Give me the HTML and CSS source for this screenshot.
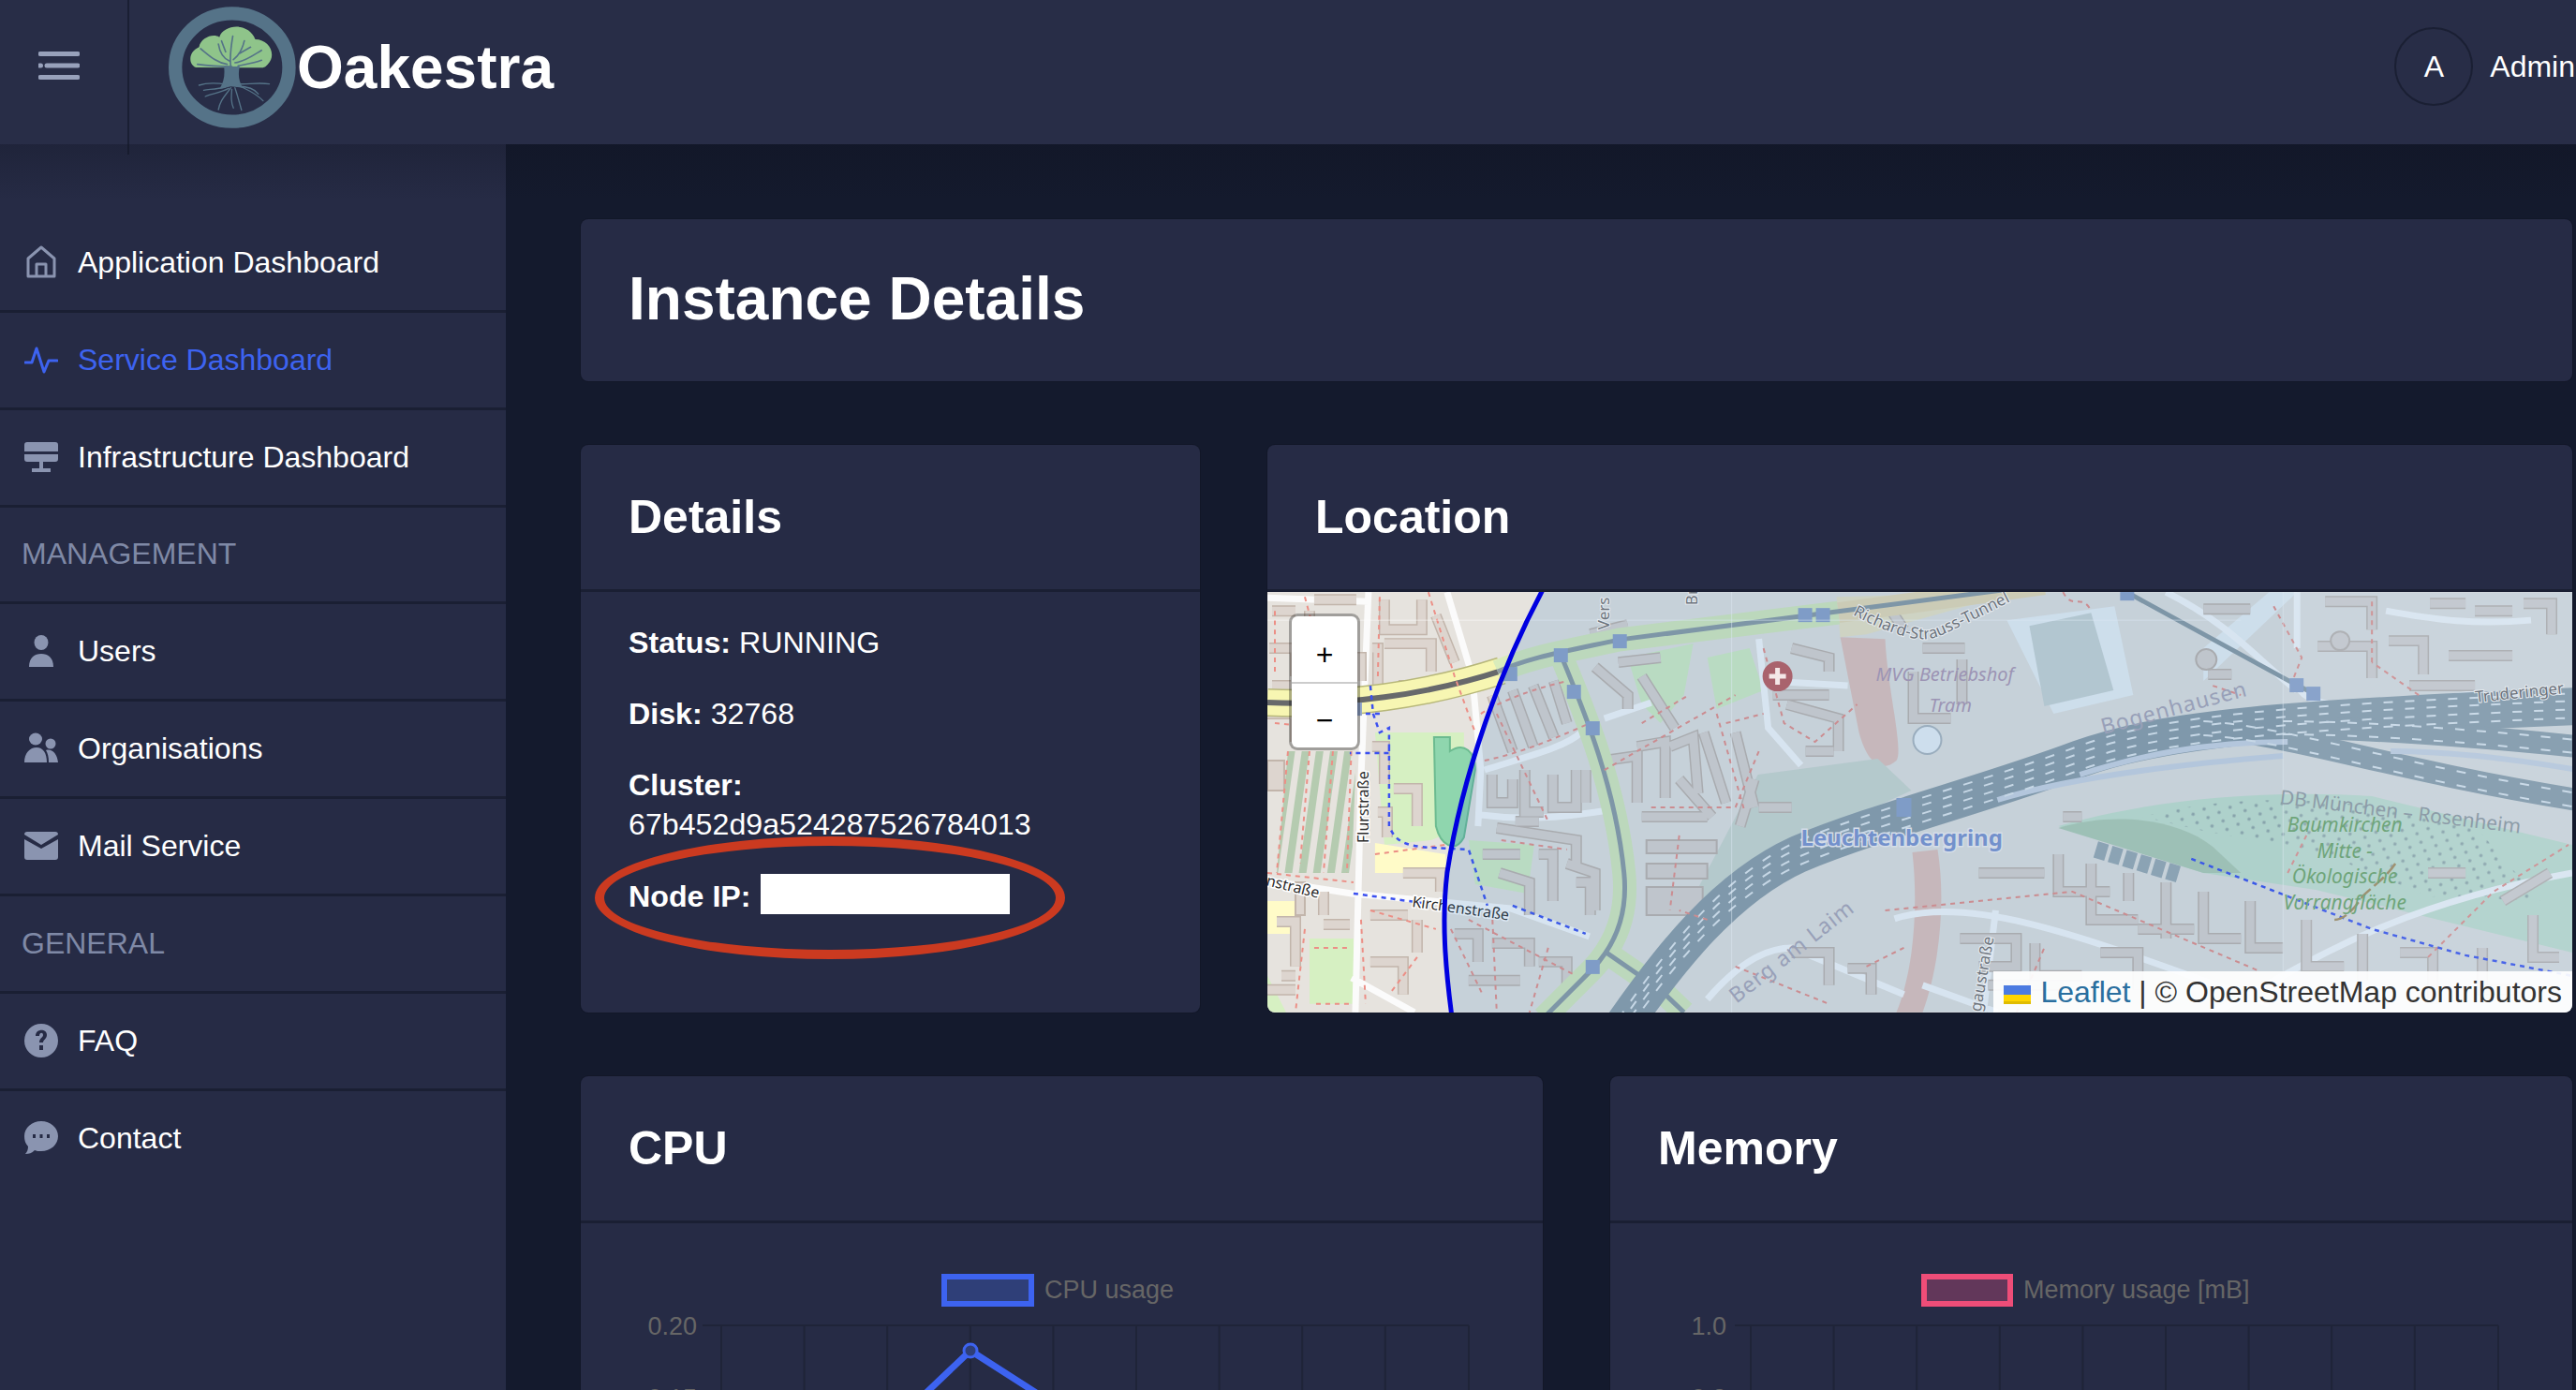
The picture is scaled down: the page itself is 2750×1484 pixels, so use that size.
FILE: index.html
```html
<!DOCTYPE html>
<html lang="en">
<head>
<meta charset="UTF-8">
<meta name="viewport" content="width=device-width, initial-scale=1.0">
<link rel="stylesheet" href="styles.css">
<title>Oakestra</title>
</head>
<body>

<!-- top bar -->
<header class="topbar">
  <div class="menu-cell">
    <svg class="burger" viewBox="0 0 44 30"><path d="M2 2.5H42M9 15H42M2 27.5H42M1.5 15H2.5" /></svg>
  </div>
  <div class="brand">
    <svg class="logo" viewBox="63 20 407 390">
      <ellipse class="logo-ring" cx="266" cy="215" rx="182" ry="173" />
      <path class="logo-crown" d="M150 215C125 205 125 165 160 150C165 120 205 105 225 118C240 75 320 70 340 125C385 125 410 175 380 205C372 215 365 216 355 216Z" />
      <path class="logo-trunk" d="M240 212L290 212C284 240 288 262 300 280L262 276L225 284C240 262 243 240 240 212Z" />
      <path class="logo-branch" d="M262 215C258 190 262 150 268 115M258 195C235 185 225 160 222 140M250 205C215 200 190 175 165 155M270 190C290 175 300 150 305 130M275 200C310 195 335 175 360 160M265 212C220 212 190 210 155 205M285 210C310 205 340 200 360 192M245 165L232 130M290 170L325 150" />
      <path class="logo-root" d="M250 270C220 265 190 262 160 272M245 278C215 285 190 285 175 288M255 282C230 295 200 300 180 308M262 280C240 310 228 320 222 350M265 285C263 310 262 325 270 345M275 280C285 310 290 330 296 352M285 272C310 285 340 295 365 322M290 268C315 270 350 262 385 268M280 275C310 275 335 280 350 300" />
    </svg>
    <span class="brand-name">Oakestra</span>
  </div>
  <div class="account">
    <span class="avatar">A</span>
    <span class="account-name">Admin</span>
  </div>
</header>

<div class="shell">

  <!-- side menu -->
  <nav class="sidebar">
    <a class="nav-item">
      <svg class="icon icon-line" viewBox="0 0 36 36"><path d="M4 33V14L18 2L32 14V33ZM13 33V20H23V33" /></svg>
      <span>Application Dashboard</span>
    </a>
    <a class="nav-item active">
      <svg class="icon icon-line" viewBox="0 0 36 36"><path d="M1 21H8L13 6L21 31L26 19H35" /></svg>
      <span>Service Dashboard</span>
    </a>
    <a class="nav-item">
      <svg class="icon" viewBox="0 0 36 36"><path d="M3 2H33A3 3 0 0 1 36 5V12H0V5A3 3 0 0 1 3 2ZM0 15H36V20A3 3 0 0 1 33 23H3A3 3 0 0 1 0 20ZM16 23H20V30H28V34H8V30H16Z" /></svg>
      <span>Infrastructure Dashboard</span>
    </a>
    <div class="nav-label">MANAGEMENT</div>
    <a class="nav-item">
      <svg class="icon" viewBox="0 0 36 36"><ellipse cx="18" cy="8" rx="7.5" ry="8" /><path d="M5 34C5 24 11 20 18 20S31 24 31 34Z" /></svg>
      <span>Users</span>
    </a>
    <a class="nav-item">
      <svg class="icon" viewBox="0 0 36 36"><ellipse cx="12" cy="7" rx="7" ry="6.500" /><ellipse cx="28" cy="12" rx="5.500" ry="5.500" /><path d="M0 32C0 22 6 16 13 16S24 22 24 32ZM26 32C26 26 25 22 23 19C29 17 35 22 36 32Z" /></svg>
      <span>Organisations</span>
    </a>
    <a class="nav-item">
      <svg class="icon" viewBox="0 0 36 36"><path d="M3 3H33A3 3 0 0 1 36 6L18 17L0 6A3 3 0 0 1 3 3ZM0 11L18 21L36 11V30A3 3 0 0 1 33 33H3A3 3 0 0 1 0 30Z" /></svg>
      <span>Mail Service</span>
    </a>
    <div class="nav-label">GENERAL</div>
    <a class="nav-item">
      <svg class="icon" viewBox="0 0 36 36"><path fill-rule="evenodd" d="M18 0A18 18 0 1 1 18 36A18 18 0 1 1 18 0ZM16 23V28H20V23ZM12 13H16C16 9 20 9 20 12C20 15 16 15 16 20H20C20 17 24 16 24 12C24 5 12 5 12 13Z" /></svg>
      <span>FAQ</span>
    </a>
    <a class="nav-item">
      <svg class="icon" viewBox="0 0 36 36"><path fill-rule="evenodd" d="M18 0C28 0 36 7 36 16S28 32 18 32C15 32 13 32 11 31C8 34 5 35 1 35C3 33 4 30 4 27C1 24 0 20 0 16C0 7 8 0 18 0ZM9 14V18H12V14ZM16.500 14V18H19.500V14ZM24 14V18H27V14Z" /></svg>
      <span>Contact</span>
    </a>
  </nav>

  <!-- page content -->
  <main class="content">
    <section class="card title-card">
      <h1>Instance Details</h1>
    </section>

    <div class="row row-info">
      <section class="card details-card">
        <h2 class="card-head">Details</h2>
        <div class="details-body">
          <p><b>Status:</b> RUNNING</p>
          <p><b>Disk:</b> 32768</p>
          <p><b>Cluster:</b><br>67b452d9a524287526784013</p>
          <p class="node-ip"><b>Node IP:</b> <span class="redacted"></span></p>
        </div>
        <div class="callout"></div>
      </section>

      <section class="card location-card">
        <h2 class="card-head">Location</h2>
        <div class="map">
          <svg class="map-tiles" viewBox="0 0 1394 449">
            <defs>
              <pattern id="orchard" width="13" height="10" patternUnits="userSpaceOnUse" patternTransform="rotate(-25)">
                <circle cx="3" cy="3" r="1.800" fill="#97a9a5" />
              </pattern>
              <pattern id="farm" width="15" height="12" patternUnits="userSpaceOnUse" patternTransform="rotate(8)">
                <rect width="8" height="12" fill="#b5cbb0" />
              </pattern>
              <path id="rail-main" d="M375 470C430 390 490 315 567 280C650 245 770 215 868 178C960 145 1090 135 1400 122" />
              <path id="rail-south" d="M1000 145C1090 150 1200 190 1400 222" />
              <path id="rows" d="M125 8V40H165V8M125 55H175V85M2 60H30V90M45 20V55H85M0 130H30V160M50 8H95M112 60H118V100M5 20H30M140 100H180M112 165H125V205M135 210H160V250M10 352H30V400M110 345H150M160 350V385M110 395H145V430M0 425H30M60 70H100V95M5 100H25M35 100H85M60 150V165M118 235H128V262M180 25L200 75M145 300H185V320M60 320V345M60 355H88M15 410H30" />
              <path id="strips" d="M240 110L262 170M262 105L284 165M284 100L306 155M306 95L320 140M240 195V225H262V200M275 190V235H295M305 195V230H330V190M340 190V225M245 252L330 265V290M290 280H305V330M320 290L350 300V340M248 300L280 310V345M350 80L385 110V125M375 75L420 70M400 90L435 145M395 165L425 160V220M430 165L455 155L460 215M360 180L395 175V225M466 150L490 225M200 365H225V395M240 375H280V400M290 395H320V420M215 415H270M345 45L385 35M265 245H290M230 280H270M330 310H345V345M400 240H470M440 200L475 240M500 150L520 230M525 230H560M505 250L520 200M560 60L600 70V85M540 110H600M555 120L610 135V170M575 170H605M700 60H745M660 10L680 40" />
              <path id="strips-east" d="M845 280V320H900M880 290V350H930M920 300V330M960 310V370M1000 320V370H1040M1050 330V380H1085M1110 350V400H1150M1170 365V415M1210 385H1245V440M740 370H800V400H760M820 375V410H870M890 385H930V425M690 85V135H730M742 72V120M1000 18H1050M1122 58H1180V92M1198 52H1235V88M1262 68H1330M1342 12H1372V45M1242 12H1280M1298 380V425H1335M1352 345V390H1380M560 385H600V420M620 402H645V430M1005 88H1030M760 300H830M850 240H870M930 360H990M1240 300H1280M1320 330L1370 300M1290 20H1330M1130 10H1180V40M1220 100H1290M770 420H850" />
            </defs>

            <rect class="land" width="1394" height="449" />

            <!-- areas -->
            <path class="green" d="M845 250C930 225 1050 210 1180 218L1394 270V385L1120 318L1000 300Z" />
            <path fill="url(#orchard)" d="M935 240C1030 215 1150 215 1290 250L1360 330L1240 325L1130 280L1000 255Z" />
            <path class="green-dark" d="M845 252C900 235 970 240 1010 272L1040 300L1000 300Z" />
            <path class="retail" d="M612 48L660 50C662 100 680 170 672 180C655 195 640 180 632 150ZM689 278L716 275C725 330 718 400 700 449H672C692 400 695 330 689 278Z" />
            <path class="beige" d="M608 5L800 0L640 45L612 48Z" />
            <path class="commercial" d="M447 341L524 195L652 178L688 212L560 270L470 350Z" />
            <path class="plot" d="M790 30L905 15L925 110L840 130ZM1000 95L1100 0H1070L1000 60Z" />
            <path class="plot-in" d="M814 36L880 22L904 105L830 122Z" />
            <path class="park" d="M115 150L210 150V250L175 265L125 270ZM0 410L20 449H0ZM45 370H92V440H45Z" />
            <path class="farmland" d="M22 170H95L90 300H10Z" fill="url(#farm)" />
            <path class="sport" d="M178 155H195V170C210 160 222 170 222 190L210 262C200 280 185 270 180 250Z" />
            <path class="park" d="M215 265L285 270L278 322L222 312ZM385 70L455 55L445 110L420 140L400 120ZM470 70L515 60L530 105L480 125Z" />
            <path class="yellow-plot" d="M115 268L190 280L192 300L115 300ZM0 330H30V365H0Z" />

            <!-- streets -->
            <path class="street" d="M0 6L108 10M108 0L100 200L94 449M192 0L219 90L228 190L225 250M0 308L90 322L260 338L344 368M90 412L157 449M232 190C280 175 320 165 335 150M228 238C280 245 320 240 370 232M360 135L410 118M525 50L535 145L570 185M535 95L620 100M960 0C1030 35 1060 75 1100 105M1100 100C1115 130 1180 125 1290 108M1100 0V60M1195 20C1250 30 1290 35 1350 30M670 349C760 320 900 380 1070 440M1010 449C1080 420 1170 340 1394 300M470 435C500 400 530 380 560 380L680 430M778 340L765 449M700 420L780 449" />

            <!-- buildings -->
            <g class="bld-out"><use href="#rows" /><use href="#strips" /><use href="#strips-east" /></g>
            <g class="bld-in"><use href="#rows" /><use href="#strips" /><use href="#strips-east" /></g>
            <path class="block" d="M405 265h75v14h-75zM405 290h65v16h-65zM405 315h60v30h-60zM0 180h18v32h-18zM30 310h10v35h-10z" />
            <circle class="block" cx="1003" cy="72" r="11" />
            <circle class="block" cx="1146" cy="52" r="10" />
            <circle class="pond" cx="705" cy="158" r="15" />

            <!-- ring road and tunnel -->
            <path class="road-edge" d="M0 118C80 122 170 110 250 84" />
            <path class="road-yellow" d="M0 118C80 122 170 110 250 84" />
            <path class="road-core" d="M0 118C80 122 170 110 250 84" />
            <path class="road-green" d="M246 85C280 70 310 65 375 51L610 22" />
            <path class="road-beige" d="M610 22L700 10L830 -8" />
            <path class="road-green" d="M313 66C340 130 372 210 381 300C385 340 375 375 345 405L295 455M362 385L420 425L445 449" />
            <path class="road-core-in" d="M246 85C280 70 310 65 375 51L830 -8M313 66C340 130 372 210 381 300C385 340 375 375 345 405L295 455M362 385L420 425L445 449" />
            <path class="road-core-in" d="M918 0L1099 99L1117 108" />

            <!-- railway -->
            <g class="rail">
              <use href="#rail-main" />
              <use href="#rail-south" />
              <path d="M1085 145C1180 145 1300 155 1400 165" />
            </g>
            <path class="rail-gap" d="M780 222C850 200 960 185 1085 175M868 195C930 175 1000 160 1090 160M1200 170C1260 170 1330 178 1400 190" />
            <g class="rail-ties">
              <use href="#rail-main" transform="translate(0 -14)" />
              <use href="#rail-main" transform="translate(0 -6)" />
              <use href="#rail-main" transform="translate(0 3)" />
              <use href="#rail-main" transform="translate(0 12)" />
              <use href="#rail-south" transform="translate(0 -7)" />
              <use href="#rail-south" transform="translate(0 8)" />
              <path d="M1085 138C1180 138 1300 148 1400 158M1085 152C1180 152 1300 162 1400 172" />
            </g>
            <path class="rail-stub" d="M885 275L975 302" />

            <!-- paths -->
            <path class="footway" d="M8 20V90M40 5L60 80M120 5L118 90M172 0L200 90L222 150M8 140L90 148M22 170L10 300M45 170L35 290M70 170L60 300M90 160L85 300M0 300L92 310M110 340L180 360M115 280L190 270M40 360L30 449M50 380H90M52 440H90M100 350L105 440M160 390L130 430M196 360L230 430" />
            <path class="footway" d="M228 130C260 110 300 100 320 95M232 180C280 170 320 150 345 140M360 190L500 110M400 140L450 110M490 140L530 130M410 230H500M480 130L510 235M525 170L500 230M440 260L430 340M245 130L300 245M250 265L320 275M215 350L330 410M240 340L245 449M300 380L280 449M530 60L552 140L585 160L630 120M470 350L440 340M500 400L600 440M640 400L680 380" />
            <path class="footway" d="M660 340L860 320L1060 405M1240 390L1310 320L1390 270M800 450L830 380M1090 300L1110 260M850 0C860 20 870 0 880 20M1075 15L1105 70L1095 95M1010 100L1040 110M1180 10V75M1230 110L1180 75" />
            <path class="cycle" d="M110 100L113 130L120 150L130 145V172H88M130 165V250C140 275 160 272 215 275L235 335M120 130H100M92 322L165 332M262 335L340 365M987 285L1090 325L1180 360L1280 388L1394 410" />
            <path class="track-brown" d="M1140 350C1150 350 1160 340 1170 325C1180 315 1195 305 1205 290" />

            <!-- tunnel entrances -->
            <g class="gates">
              <rect x="567" y="17" width="15" height="15" /><rect x="586" y="17" width="15" height="15" />
              <rect x="369" y="45" width="15" height="15" /><rect x="306" y="60" width="15" height="15" />
              <rect x="252" y="80" width="15" height="15" /><rect x="320" y="99" width="15" height="15" />
              <rect x="340" y="138" width="15" height="15" /><rect x="340" y="393" width="15" height="15" />
              <rect x="672" y="220" width="16" height="20" /><rect x="1092" y="92" width="15" height="15" />
              <rect x="1110" y="101" width="15" height="15" /><rect x="911" y="-6" width="15" height="15" />
              <rect x="96" y="118" width="5" height="14" />
            </g>

            <!-- tile seams -->
            <path class="seam" d="M0 30H1040M496 0V449M1085 0V405" />

            <!-- labels outside the circle -->
            <text class="road-label" transform="translate(108 268) rotate(-90)">Flurstraße</text>
            <text class="road-label" transform="translate(-2 313) rotate(14)">nstraße</text>
            <text class="road-label" transform="translate(154 336) rotate(8)">Kirchenstraße</text>

            <!-- coverage circle -->
            <path class="coverage" d="M295 0C250 80 208 195 192 300C186 350 190 400 197 449H1394V0Z" />
            <path class="coverage-edge" d="M295 -4C250 80 208 195 192 300C186 350 190 400 197 453" />
            <rect class="fade" x="1085" width="309" height="449" />

            <!-- hospital -->
            <ellipse class="hospital" cx="545" cy="90" rx="16" ry="16" />
            <path class="hospital-cross" d="M545 81V99M536 90H554" />

            <!-- labels inside the circle -->
            <path id="richard" class="label-path" d="M625 24Q690 58 715 48T840 -14" />
            <text class="road-label-small"><textPath href="#richard">Richard-Strauss-Tunnel</textPath></text>
            <text class="road-label-small" transform="translate(365 40) rotate(-90)">Vers</text>
            <text class="road-label-small" transform="translate(459 14) rotate(-90)">Br</text>
            <text class="road-label-small" transform="translate(1291 118) rotate(-6)">Truderinger</text>
            <text class="road-label-small" transform="translate(762 449) rotate(-80)">gaustraße</text>
            <text class="place" x="650" y="95" >MVG Betriebshof</text>
            <text class="place" x="707" y="128">Tram</text>
            <text class="suburb" transform="translate(893 152) rotate(-15)">Bogenhausen</text>
            <text class="suburb" transform="translate(501 440) rotate(-38)">Berg am Laim</text>
            <text class="rail-label" transform="translate(1081 226) rotate(7)">DB München – Rosenheim</text>
            <text class="nature" x="1151" y="256">Baumkirchen</text>
            <text class="nature" x="1151" y="284">Mitte -</text>
            <text class="nature" x="1151" y="311">Ökologische</text>
            <text class="nature" x="1151" y="339">Vorrangfläche</text>
            <text class="station" x="570" y="271">Leuchtenbergring</text>
          </svg>
          <div class="zoom-box">
            <span class="zoom-btn">+</span>
            <span class="zoom-btn">−</span>
          </div>
          <div class="attribution"><svg class="flag" viewBox="0 0 29 20"><rect width="29" height="10" fill="#4c7be1" /><rect y="10" width="29" height="7" fill="#ffd500" /><rect y="17" width="29" height="3" fill="#e0bc00" /></svg><a>Leaflet</a> | © OpenStreetMap contributors</div>
        </div>
      </section>
    </div>

    <div class="row row-charts">
      <section class="card chart-card">
        <h2 class="card-head">CPU</h2>
        <svg class="chart" width="1027" height="300" viewBox="0 0 1027 300">
          <rect class="legend-cpu" x="388" y="57" width="93" height="29" />
          <text class="chart-text" x="495" y="80">CPU usage</text>
          <path class="grid" d="M130 109H948M150 109V300M238.600 109V300M327.200 109V300M415.800 109V300M504.400 109V300M593 109V300M681.600 109V300M770.200 109V300M858.800 109V300M948 109V300" />
          <text class="chart-text tick" x="124" y="119">0.20</text>
          <text class="chart-text tick" x="124" y="196">0.15</text>
          <path class="line-cpu" d="M354 195L416 136L508 195" />
          <circle class="dot-cpu" cx="416" cy="136" r="7" />
        </svg>
      </section>
      <section class="card chart-card">
        <h2 class="card-head">Memory</h2>
        <svg class="chart" width="1027" height="300" viewBox="0 0 1027 300">
          <rect class="legend-mem" x="335" y="57" width="92" height="29" />
          <text class="chart-text" x="441" y="80">Memory usage [mB]</text>
          <path class="grid" d="M133 109H948M150 109V300M238.600 109V300M327.200 109V300M415.800 109V300M504.400 109V300M593 109V300M681.600 109V300M770.200 109V300M858.800 109V300M948 109V300" />
          <text class="chart-text tick" x="124" y="119">1.0</text>
          <text class="chart-text tick" x="124" y="196">0.8</text>
        </svg>
      </section>
    </div>
  </main>
</div>

</body>
</html>
```

FILE: styles.css
```css
html, body { margin: 0; padding: 0; height: 1484px; overflow: hidden; background: #141a2d; }
body { font-family: "Liberation Sans", Arial, sans-serif; font-size: 32px; color: #fff; }

/* top bar */
.topbar { position: relative; z-index: 2; display: flex; align-items: stretch; height: 154px; background: #282d47; }
.topbar::after { content: ""; position: absolute; left: 0; right: 0; top: 154px; height: 60px; background: linear-gradient(rgba(14, 17, 30, .28), rgba(14, 17, 30, 0)); pointer-events: none; }
.menu-cell { position: relative; width: 136px; display: flex; align-items: center; justify-content: center; padding-bottom: 14px; box-sizing: border-box; }
.menu-cell::after { content: ""; position: absolute; right: -2px; top: 0; height: 165px; width: 2px; background: #1a1f33; }
.burger { width: 44px; height: 30px; margin-right: 10px; fill: none; stroke: #98a1bb; stroke-width: 5; stroke-linecap: round; }
.brand { display: flex; align-items: center; padding-left: 43px; }
.logo { width: 138px; height: 130px; margin-top: -10px; }
.logo-ring { fill: none; stroke: #557388; stroke-width: 43; }
.logo-crown { fill: #8fc48a; }
.logo-trunk { fill: #557388; }
.logo-branch, .logo-root { fill: none; stroke: #557388; stroke-width: 5; stroke-linecap: round; }
.logo-root { stroke-width: 4; }
.brand-name { font-size: 64px; font-weight: 700; margin-top: -10px; }
.account { margin-left: auto; display: flex; align-items: center; gap: 18px; margin-right: 1px; margin-top: -12px; white-space: nowrap; }
.avatar { width: 84px; height: 84px; box-sizing: border-box; border: 2px solid #1a1f33; border-radius: 50%; display: flex; align-items: center; justify-content: center; }

.shell { display: flex; height: 1330px; }

/* side menu */
.sidebar { flex: 0 0 540px; background: #262b45; padding-top: 76px; }
.nav-item, .nav-label { display: flex; align-items: center; height: 100.85px; border-bottom: 3px solid #1a1f33; }
.nav-item { padding-left: 26px; gap: 21px; }
.nav-item:last-child { border-bottom: 0; }
.nav-label { padding-left: 23px; color: #7f89a6; }
.icon { width: 36px; height: 36px; flex: none; fill: #8a94b0; }
.icon-line { fill: none; stroke: #8a94b0; stroke-width: 3; stroke-linejoin: round; stroke-linecap: round; }
.nav-item.active { color: #3d63f0; }
.nav-item.active .icon-line { stroke: #3d63f0; }

/* content */
.content { flex: 1; min-width: 0; padding: 80px 4px 0 80px; }
.card { position: relative; background: #262b45; border-radius: 8px; box-shadow: 0 0 0 1px #121728; }
.title-card { height: 173px; display: flex; align-items: center; padding-left: 51px; }
h1 { margin: 0 0 3px; font-size: 64px; font-weight: 700; }
.row { display: grid; margin-top: 68px; }
.row-info { grid-template-columns: 661px 1fr; column-gap: 72px; height: 606px; }
.row-charts { grid-template-columns: 1fr 1fr; column-gap: 72px; height: 600px; }
.card-head { margin: 0; height: 157px; box-sizing: border-box; display: flex; align-items: center; padding-left: 51px; font-size: 50px; font-weight: 700; border-bottom: 3px solid #1a1f33; }

/* details */
.details-body { padding: 33px 51px 0; line-height: 42px; font-size: 32.2px; }
.details-body p { margin: 0 0 34px; }
.details-body .node-ip { margin-top: -2px; }
.redacted { display: inline-block; width: 266px; height: 43px; vertical-align: -8px; background: #fff; margin-left: 1px; }
.callout { position: absolute; left: 15px; top: 418px; width: 502px; height: 131px; box-sizing: border-box; border: 10px solid #cb3a20; border-radius: 50%; pointer-events: none; }

/* map */
.location-card { overflow: hidden; }
.map { position: relative; height: 449px; overflow: hidden; background: #e9e6e1; border-radius: 0 0 8px 8px; }
.map-tiles { display: block; width: 100%; height: 449px; font-family: "Noto Sans", "DejaVu Sans", sans-serif; }
.land { fill: #e6e3de; }
.green { fill: #c9e3cd; }
.green-dark { fill: #b4cfb4; }
.retail { fill: #e6c4ba; }
.beige { fill: #efe6c4; }
.commercial { fill: #d0d9cf; }
.plot { fill: #eef3f5; }
.plot-in { fill: #ced6d4; }
.park { fill: #d6f0c2; }
.sport { fill: #8fd6ae; stroke: #6cbb90; stroke-width: 2; }
.yellow-plot { fill: #fffbc8; }
.street { fill: none; stroke: #fbfbfb; stroke-width: 7; }
.road-edge { fill: none; stroke: #b7b77a; stroke-width: 30; }
.road-yellow { fill: none; stroke: #f7f6b2; stroke-width: 27; }
.road-core { fill: none; stroke: #67696b; stroke-width: 6; }
.road-green { fill: none; stroke: #d9ecbb; stroke-width: 25; }
.road-beige { fill: none; stroke: #ecdcb4; stroke-width: 22; }
.road-core-in { fill: none; stroke: #8e9ba2; stroke-width: 5; }
.bld-out { fill: none; stroke: #c2b5ab; stroke-width: 12; }
.bld-in { fill: none; stroke: #ddd5cf; stroke-width: 9; }
.block { fill: #ddd5cf; stroke: #c2b5ab; stroke-width: 2; }
.pond { fill: #eef3f7; stroke: #b0b8bd; stroke-width: 2; }
.rail { fill: none; stroke: #8f9ea6; stroke-width: 40; }
.rail use:nth-child(2), .rail path { stroke-width: 24; }
.rail-gap { fill: none; stroke: #cfd6e2; stroke-width: 6; }
.rail-ties { fill: none; stroke: #e6ebee; stroke-width: 2; stroke-dasharray: 10 13; }
.rail-stub { fill: none; stroke: #9eabb1; stroke-width: 18; stroke-dasharray: 12 4; }
.footway { fill: none; stroke: #ec8f86; stroke-width: 2; stroke-dasharray: 5 5; }
.cycle { fill: none; stroke: #3b50f0; stroke-width: 2.500; stroke-dasharray: 5 5; }
.track-brown { fill: none; stroke: #ab8a52; stroke-width: 2.500; stroke-dasharray: 14 5; }
.gates { fill: #8fa3c9; }
.seam { fill: none; stroke: #fff; stroke-width: 1; opacity: .55; }
.coverage { fill: #3a7dc4; opacity: .18; }
.coverage-edge { fill: none; stroke: #0000e0; stroke-width: 5; }
.fade { fill: #fff; opacity: .08; }
.hospital { fill: #a9636d; }
.hospital-cross { fill: none; stroke: #f4e8e8; stroke-width: 5; }
.label-path { fill: none; }
.road-label { font-size: 16px; fill: #2b2b2b; stroke: #fff; stroke-width: 3; paint-order: stroke; }
.road-label-small { font-size: 17px; fill: #6c737c; stroke: #e6ebf0; stroke-width: 2; paint-order: stroke; }
.place { font-size: 20px; font-style: italic; fill: #9c94b4; }
.suburb { font-size: 23px; fill: #98a0b8; letter-spacing: 1px; }
.rail-label { font-size: 21px; fill: #8d9ca8; }
.nature { font-size: 21px; font-style: italic; fill: #6fa57a; text-anchor: middle; }
.station { font-size: 24px; font-weight: 700; fill: #7391cc; stroke: #d5dde8; stroke-width: 3; paint-order: stroke; }
.zoom-box { position: absolute; left: 26px; top: 26px; width: 70px; box-shadow: 0 0 0 3px rgba(0, 0, 0, .3); border-radius: 6px; background: #fff; overflow: hidden; }
.zoom-btn { display: flex; align-items: flex-end; justify-content: center; height: 70px; box-sizing: border-box; padding-bottom: 9px; color: #000; font-size: 32px; line-height: 40px; }
.zoom-btn + .zoom-btn { border-top: 2px solid #ccc; }
.attribution { position: absolute; right: 0; bottom: 0; height: 44px; line-height: 44px; padding: 0 11px; background: rgba(255, 255, 255, .92); color: #333; white-space: pre; }
.attribution a { color: #2a6f9f; }
.flag { width: 29px; height: 20px; margin-right: 10px; vertical-align: -2px; }

/* charts */
.chart { display: block; font-family: "Liberation Sans", Arial, sans-serif; }
.chart-text { font-size: 27px; fill: #666; }
.tick { text-anchor: end; }
.grid { fill: none; stroke: #1f2438; stroke-width: 2; }
.legend-cpu { fill: #2f3f78; stroke: #3d63f0; stroke-width: 6; }
.legend-mem { fill: #62375a; stroke: #ee4d78; stroke-width: 6; }
.line-cpu { fill: none; stroke: #3d63f0; stroke-width: 7; }
.dot-cpu { fill: #2f3f78; stroke: #3d63f0; stroke-width: 3; }
```
